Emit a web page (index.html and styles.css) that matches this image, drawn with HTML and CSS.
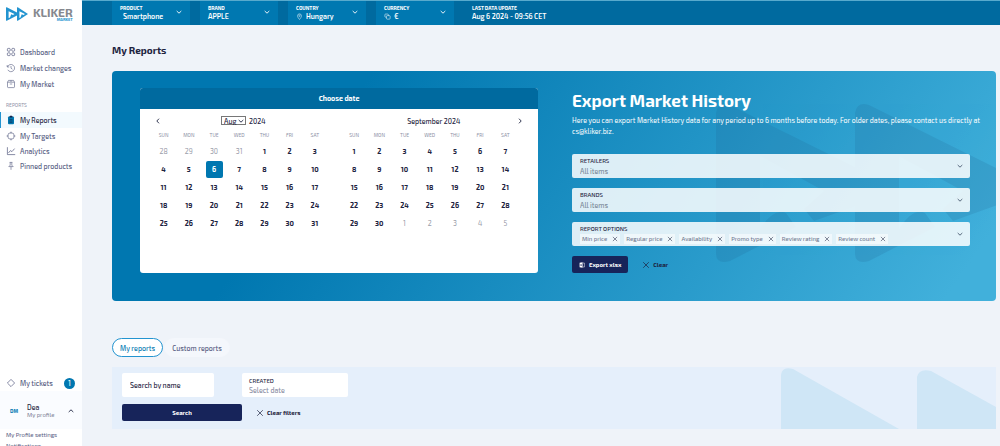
FILE: index.html
```html
<!DOCTYPE html>
<html lang="en">
<head>
<meta charset="utf-8">
<title>My Reports</title>
<link rel="stylesheet" href="styles.css">
</head>
<body>
<svg class="defs" aria-hidden="true">
  <symbol id="chev" viewBox="0 0 8 8"><path d="M1.700 3 4 5.200l2.300-2.200" fill="none" stroke="currentColor" stroke-width=".9"/></symbol>
  <symbol id="x" viewBox="0 0 8 8"><path d="M1.200 1.200l5.600 5.600M6.800 1.200 1.200 6.800" fill="none" stroke="currentColor" stroke-width=".7"/></symbol>
</svg>
<div class="app">
  <aside class="sidebar">
    <a class="logo" href="#">
      <svg class="logo-mark" viewBox="0 0 22 14" aria-hidden="true">
        <path d="M0 .8Q0 0 .8.3L11 5.600V.8Q11 0 11.800.3L22 7 11.800 13.700Q11 14 11 13.200V8.600L.8 13.700Q0 14 0 13.200z" fill="#2394d0"/>
        <path d="M2.600 4.200 8.500 7 7 8 5.200 7.200 4 10.600 2.600 11zM13.400 4.200 19 7l-1.500 1-1.800-.8-1.200 3.400-1.100.4z" fill="#fff"/>
      </svg>
      <span class="logo-text"><span class="logo-name">KLIKER</span><span class="logo-sub">MARKET</span></span>
    </a>
    <nav class="menu">
      <a href="#"><svg viewBox="0 0 10 10"><g fill="none" stroke="currentColor" stroke-width=".7"><rect x="1.400" y="1.400" width="2.800" height="2.800" rx=".8"/><rect x="5.800" y="1.400" width="2.800" height="2.800" rx=".8"/><rect x="1.400" y="5.800" width="2.800" height="2.800" rx=".8"/><rect x="5.800" y="5.800" width="2.800" height="2.800" rx=".8"/></g></svg>Dashboard</a>
      <a href="#"><svg viewBox="0 0 10 10"><path d="M1.200 2v2h2M1.600 3.800a3.600 3.600 0 1 1 .2 3M5 3v2.200l1.400 1" fill="none" stroke="currentColor" stroke-width=".6"/></svg>Market changes</a>
      <a href="#"><svg viewBox="0 0 10 10"><path d="M1.500 3.200h7v4.600q0 .8-.8.8H2.300q-.8 0-.8-.8zM1.500 3.200l1-1.800h5l1 1.800M5 1.400V3M3.800 5h2.400" fill="none" stroke="currentColor" stroke-width=".6"/></svg>My Market</a>
      <h2 class="menu-title">REPORTS</h2>
      <a href="#" class="active"><svg viewBox="0 0 10 10"><rect x="2" y="1.600" width="6" height="7.600" rx="1" fill="#0077b0"/><rect x="3.600" y=".8" width="2.800" height="1.800" rx=".5" fill="#14264f"/><path d="M3.500 4.600h3M3.500 6h3M3.500 7.400h3" stroke="#14264f" stroke-width=".6"/></svg>My Reports</a>
      <a href="#" class="tight"><svg viewBox="0 0 10 10"><circle cx="5" cy="5" r="3.300" fill="none" stroke="currentColor" stroke-width=".6"/><path d="M5 .6v2M5 7.400v2M.6 5h2M7.400 5h2" stroke="currentColor" stroke-width=".6"/></svg>My Targets</a>
      <a href="#" class="tight"><svg viewBox="0 0 10 10"><path d="M1.400 1.200v7.400h7.800M2.400 7l2-2.400 1.600 1 2.600-3" fill="none" stroke="currentColor" stroke-width=".7"/></svg>Analytics</a>
      <a href="#" class="tight"><svg viewBox="0 0 10 10"><path d="M3.600 1.400h2.800M4.200 1.400v2.800L2.800 5.600h4.400L5.800 4.200V1.400M5 5.600v3.200" fill="none" stroke="currentColor" stroke-width=".6"/></svg>Pinned products</a>
    </nav>
    <div class="account">
      <a class="tickets" href="#"><svg viewBox="0 0 10 10"><path d="M5 1.400 8.600 5 5 8.600 1.400 5z" fill="none" stroke="currentColor" stroke-width=".7"/></svg>My tickets<span class="count">1</span></a>
      <button class="profile" type="button"><span class="initials">DM</span><span class="who"><span>Dea</span><small>My profile</small></span><svg class="ic up"><use href="#chev"/></svg></button>
      <a class="sub" href="#">My Profile settings</a>
      <a class="sub" href="#">Notifications</a>
    </div>
  </aside>

  <div class="main">
    <header class="topbar">
      <button type="button" class="scope"><span class="cap">PRODUCT</span><span class="val indent">Smartphone</span><svg class="ic"><use href="#chev"/></svg></button>
      <button type="button" class="scope"><span class="cap">BRAND</span><span class="val">APPLE</span><svg class="ic"><use href="#chev"/></svg></button>
      <button type="button" class="scope"><span class="cap">COUNTRY</span><span class="val"><svg class="pic" viewBox="0 0 8 8"><path d="M4 7.400C2.400 5.600 1.800 4.400 1.800 3.200a2.200 2.200 0 0 1 4.400 0C6.200 4.400 5.600 5.600 4 7.400z" fill="none" stroke="#fff" stroke-width=".6"/><circle cx="4" cy="3.200" r=".8" fill="none" stroke="#fff" stroke-width=".5"/></svg>Hungary</span><svg class="ic"><use href="#chev"/></svg></button>
      <button type="button" class="scope"><span class="cap">CURRENCY</span><span class="val"><svg class="pic" viewBox="0 0 8 8"><rect x="1" y="1.200" width="4" height="3.600" rx=".8" fill="none" stroke="#fff" stroke-width=".6"/><rect x="2.800" y="3" width="4.200" height="4" rx=".8" fill="#0077b0" stroke="#fff" stroke-width=".6"/></svg>€</span><svg class="ic"><use href="#chev"/></svg></button>
      <div class="scope plain"><span class="cap">LAST DATA UPDATE</span><span class="val">Aug 6 2024 - 09:56 CET</span></div>
    </header>

    <main class="content">
      <h1>My Reports</h1>
      <section class="hero">
        <svg class="hero-art" viewBox="0 0 280 164" aria-hidden="true">
          <defs><path id="play" d="M0 12Q2 0 14 4L165 79V96L98 120 88 108 108 90 44 55V128Q58 106 70 112L80 126 14 160Q0 164 0 152z"/></defs>
          <g fill="#20608f" opacity=".17"><use href="#play"/><use href="#play" x="139"/></g>
        </svg>
        <div class="calendar">
          <h2>Choose date</h2>
          <div class="cal-body">
            <div class="cal-nav">
              <button type="button" class="arrow prev" aria-label="Previous month"><svg class="ic"><use href="#chev"/></svg></button>
              <div class="captions">
                <div><span class="month-pick"><select aria-label="Month"><option>Aug</option></select><svg class="ic"><use href="#chev"/></svg></span><span>2024</span></div>
                <div>September 2024</div>
              </div>
              <button type="button" class="arrow next" aria-label="Next month"><svg class="ic"><use href="#chev"/></svg></button>
            </div>
            <div class="months">
              <table>
                <thead><tr><th>SUN</th><th>MON</th><th>TUE</th><th>WED</th><th>THU</th><th>FRI</th><th>SAT</th></tr></thead>
                <tbody>
                <tr><td class="out">28</td><td class="out">29</td><td class="out">30</td><td class="out">31</td><td>1</td><td>2</td><td>3</td></tr>
                <tr><td>4</td><td>5</td><td><span class="picked">6</span></td><td>7</td><td>8</td><td>9</td><td>10</td></tr>
                <tr><td>11</td><td>12</td><td>13</td><td>14</td><td>15</td><td>16</td><td>17</td></tr>
                <tr><td>18</td><td>19</td><td>20</td><td>21</td><td>22</td><td>23</td><td>24</td></tr>
                <tr><td>25</td><td>26</td><td>27</td><td>28</td><td>29</td><td>30</td><td>31</td></tr>
                </tbody>
              </table>
              <table>
                <thead><tr><th>SUN</th><th>MON</th><th>TUE</th><th>WED</th><th>THU</th><th>FRI</th><th>SAT</th></tr></thead>
                <tbody>
                <tr><td>1</td><td>2</td><td>3</td><td>4</td><td>5</td><td>6</td><td>7</td></tr>
                <tr><td>8</td><td>9</td><td>10</td><td>11</td><td>12</td><td>13</td><td>14</td></tr>
                <tr><td>15</td><td>16</td><td>17</td><td>18</td><td>19</td><td>20</td><td>21</td></tr>
                <tr><td>22</td><td>23</td><td>24</td><td>25</td><td>26</td><td>27</td><td>28</td></tr>
                <tr><td>29</td><td>30</td><td class="out">1</td><td class="out">2</td><td class="out">3</td><td class="out">4</td><td class="out">5</td></tr>
                </tbody>
              </table>
            </div>
          </div>
        </div>
        <form class="export">
          <h2>Export Market History</h2>
          <p>Here you can export Market History data for any period up to 6 months before today. For older dates, please contact us directly at cs@kliker.biz.</p>
          <div class="field"><label for="retailers">RETAILERS</label><select id="retailers"><option>All items</option></select><svg class="ic"><use href="#chev"/></svg></div>
          <div class="field"><label for="brands">BRANDS</label><select id="brands"><option>All items</option></select><svg class="ic"><use href="#chev"/></svg></div>
          <div class="field" role="group" aria-labelledby="opts"><span class="label" id="opts">REPORT OPTIONS</span>
            <div class="chips">
              <button type="button">Min price<svg><use href="#x"/></svg></button>
              <button type="button">Regular price<svg><use href="#x"/></svg></button>
              <button type="button">Availability<svg><use href="#x"/></svg></button>
              <button type="button">Promo type<svg><use href="#x"/></svg></button>
              <button type="button">Review rating<svg><use href="#x"/></svg></button>
              <button type="button">Review count<svg><use href="#x"/></svg></button>
            </div><svg class="ic"><use href="#chev"/></svg></div>
          <div class="actions">
            <button type="button" class="primary"><svg class="file" viewBox="0 0 6 6"><path d="M.6.8 3.600.2v5.600L.6 5.200z" fill="#fff"/><path d="M3.800 1h1.600v4H3.800" fill="none" stroke="#fff" stroke-width=".5"/><path d="M1.400 2.200l1.400 1.800M2.800 2.200 1.400 4" stroke="#14225a" stroke-width=".5"/></svg>Export xlsx</button>
            <button type="button" class="clear"><svg class="ic"><use href="#x"/></svg>Clear</button>
          </div>
        </form>
      </section>

      <div class="tabs" role="tablist">
        <button type="button" role="tab" aria-selected="true">My reports</button>
        <button type="button" role="tab" aria-selected="false">Custom reports</button>
      </div>

      <form class="filters">
        <svg class="filter-art" viewBox="0 0 215 61" aria-hidden="true"><path d="M0 61V7Q1-2 12 1L118 61zM136 61V9Q138 0 150 3L215 39V61z" fill="#cfe6f6"/></svg>
        <input class="search" type="text" aria-label="Search by name" placeholder="Search by name">
        <div class="created"><label for="created">CREATED</label><input id="created" type="text" placeholder="Select date"></div>
        <button type="button" class="primary">Search</button>
        <button type="button" class="clear"><svg class="ic"><use href="#x"/></svg>Clear filters</button>
      </form>
    </main>
  </div>
</div>
</body>
</html>
```
FILE: styles.css
```css
* { box-sizing: border-box; }
body { margin: 0; font: 500 7px/10px "Exo 2", Roboto, sans-serif; color: #1d2340; background: #eff3f9; }
.defs { position: absolute; width: 0; height: 0; }
button, input, select { font: inherit; color: inherit; border: 0; padding: 0; margin: 0; background: none; }
button { cursor: pointer; }
a { color: inherit; text-decoration: none; }
h1, h2, p { margin: 0; }
svg { display: block; flex: none; }
.ic { width: 8px; height: 8px; }

.app { display: flex; height: 100vh; overflow: hidden; }
.sidebar { width: 82px; flex: none; background: #fff; overflow: hidden; color: #545a80; border-top-right-radius: 3px; }
.main { flex: 1; min-width: 0; }

.logo { display: flex; gap: 5px; padding: 7px 0 0 6px; height: 44px; }
.logo-mark { width: 22px; height: 14px; }
.logo-text { display: flex; flex-direction: column; align-items: flex-end; }
.logo-name { font-size: 12px; font-weight: 700; line-height: 10px; color: #85888e; }
.logo-sub { font-size: 4px; font-weight: 700; line-height: 5px; color: #2394d0; }

.menu a, .tickets { display: flex; align-items: center; gap: 4px; height: 16px; padding-left: 6px; }
.menu .tight { height: 15px; }
.menu svg, .tickets svg { width: 10px; height: 10px; }
.menu-title { font-size: 5px; font-weight: 400; line-height: 8px; color: #8c90a5; padding: 9px 0 3px 6px; }
.menu .active { color: #1d2340; background: #f3fafe; border-left: 1px solid #2394d0; padding-left: 5px; }
.account { margin-top: 202px; }
.tickets { padding-right: 7px; }
.count { margin-left: auto; width: 11px; height: 11px; border-radius: 50%; background: #0077b0; color: #fff; text-align: center; line-height: 11px; }
.profile { display: flex; align-items: center; width: 100%; height: 38px; padding: 2px 7px 0 10px; text-align: left; background: #fafcff; }
.initials { width: 17px; font-size: 5px; font-weight: 700; color: #0077b0; }
.who { flex: 1; color: #1d2340; }
.who span, .who small { display: block; line-height: 8px; }
.who small { font-size: 6px; font-weight: 400; color: #7b7f95; }
.up { transform: rotate(180deg); color: #1d2340; }
.sub { display: block; padding-left: 6px; font-size: 6px; font-weight: 400; line-height: 11px; }

.topbar { display: flex; gap: 10px; height: 25px; padding-left: 30px; background: #006a9f; border-top: 1px solid #58aacd; color: #fff; }
.scope { display: grid; grid-template-columns: 1fr 8px; grid-template-rows: 8px 9px; align-content: center; align-items: center; width: 78px; padding: 0 7px 2px 8px; background: #0078b1; text-align: left; }
.cap { font-size: 5px; font-weight: 700; line-height: 8px; }
.val { grid-column: 1; grid-row: 2; display: flex; gap: 3px; align-items: center; font-weight: 600; line-height: 9px; }
.indent { padding-left: 3px; }
.scope .ic { grid-column: 2; grid-row: 1 / 3; }
.pic { width: 7px; height: 7px; }
.plain { width: auto; background: none; white-space: nowrap; }

.content { padding: 18px 4px 0 30px; }
h1 { font-size: 10px; font-weight: 700; line-height: 14px; margin-bottom: 14px; }

.hero { position: relative; overflow: hidden; display: grid; grid-template-columns: 1fr 1fr; gap: 34px; padding: 17px 26px 28px 28px; border-radius: 4px; background: linear-gradient(125deg, #0077b0 25%, #41b0db 95%); }
.hero-art { position: absolute; right: 0; top: 30px; width: 280px; height: 164px; }
.calendar, .export { position: relative; }
.calendar { border-radius: 3px; overflow: hidden; background: #fff; }
.calendar h2 { background: #006a9f; color: #fff; font-size: 7px; line-height: 21px; text-align: center; }
.cal-nav { display: grid; grid-template-columns: 14px 1fr 14px; align-items: center; padding: 5px 11px 0; height: 18px; }
.arrow { grid-row: 1; z-index: 1; display: grid; place-items: center; }
.prev { grid-column: 1; }
.prev svg { transform: rotate(90deg); }
.next { grid-column: 3; }
.next svg { transform: rotate(-90deg); }
.captions { grid-column: 1 / -1; grid-row: 1; display: grid; grid-template-columns: 1fr 1fr; gap: 14px; padding: 0 5px 0 4px; }
.captions div { display: flex; justify-content: center; align-items: center; gap: 3px; }
.month-pick { display: grid; grid-template-columns: 1fr 8px; align-items: center; width: 25px; height: 9px; border: 1px solid #777; }
.month-pick select { grid-column: 1 / 3; grid-row: 1; appearance: none; width: 100%; height: 7px; line-height: 7px; padding-left: 2px; }
.month-pick .ic { grid-column: 2; grid-row: 1; pointer-events: none; }
.months { display: grid; grid-template-columns: 1fr 1fr; gap: 14px; padding: 3px 20px 0 11px; }
table { width: 100%; table-layout: fixed; border-collapse: collapse; text-align: center; }
th { padding: 0 0 2px; font-size: 5px; font-weight: 400; line-height: 10px; color: #8c90a5; }
td { padding: 0; height: 18px; font-weight: 700; }
.out { font-weight: 400; color: #9a9daa; }
.picked { display: block; width: 17px; margin: 0 auto; line-height: 17px; border-radius: 2px; background: #0077b0; color: #fff; }

.export h2 { color: #fff; font-size: 17px; line-height: 24px; }
.export p { color: #fff; font-weight: 400; line-height: 11px; margin: 3px -16px 17px 0; }
.field { display: grid; grid-template-columns: 1fr 8px; align-items: center; align-content: center; height: 24px; padding: 0 6px 0 8px; margin-bottom: 10px; border-radius: 2px; background: rgba(255, 255, 255, .85); }
.field label, .label, .created label { font-size: 6px; line-height: 10px; }
.field select { grid-column: 1; appearance: none; height: 11px; color: #7b8a99; }
.field > .ic { grid-column: 2; grid-row: 1 / 3; color: #4a5a70; }
.chips { display: flex; gap: 4px; }
.chips button { display: flex; align-items: center; gap: 5px; height: 10px; padding: 0 2px; font-size: 6px; color: #6f7890; background: rgba(255, 255, 255, .5); }
.chips svg { width: 6px; height: 6px; color: #1d2340; }
.actions { display: flex; gap: 14px; }
.primary { display: flex; justify-content: center; align-items: center; gap: 4px; height: 17px; padding: 0 7px; border-radius: 2px; background: #17245a; color: #fff; font-size: 6px; font-weight: 700; }
.file { width: 6px; height: 6px; }
.clear { display: flex; align-items: center; gap: 3px; font-size: 6px; font-weight: 700; }

.tabs { display: flex; gap: 1px; margin: 37px 0 10px; }
.tabs button { height: 19px; padding: 0 7px; border: 1px solid #f4f7fc; border-radius: 10px; background: #f4f7fc; color: #545a80; }
.tabs [aria-selected="true"] { border-color: #2394d0; background: #fff; color: #0077b0; }

.filters { position: relative; display: grid; grid-template-columns: 120px 106px; row-gap: 7px; padding: 6px 10px 8px; background: #e5effb; }
.filter-art { position: absolute; right: 0; bottom: 0; width: 215px; height: 61px; }
.search { width: 92px; height: 24px; padding: 0 8px; background: #fff; border-radius: 2px; }
.search::placeholder { color: #1d2340; opacity: 1; }
.created { display: grid; align-content: center; height: 24px; padding: 0 7px; background: #fff; border-radius: 2px; }
.created input { width: 100%; height: 9px; }
.created input::placeholder { color: #8c90a5; opacity: 1; }
.filters .clear { padding-left: 14px; }
```
